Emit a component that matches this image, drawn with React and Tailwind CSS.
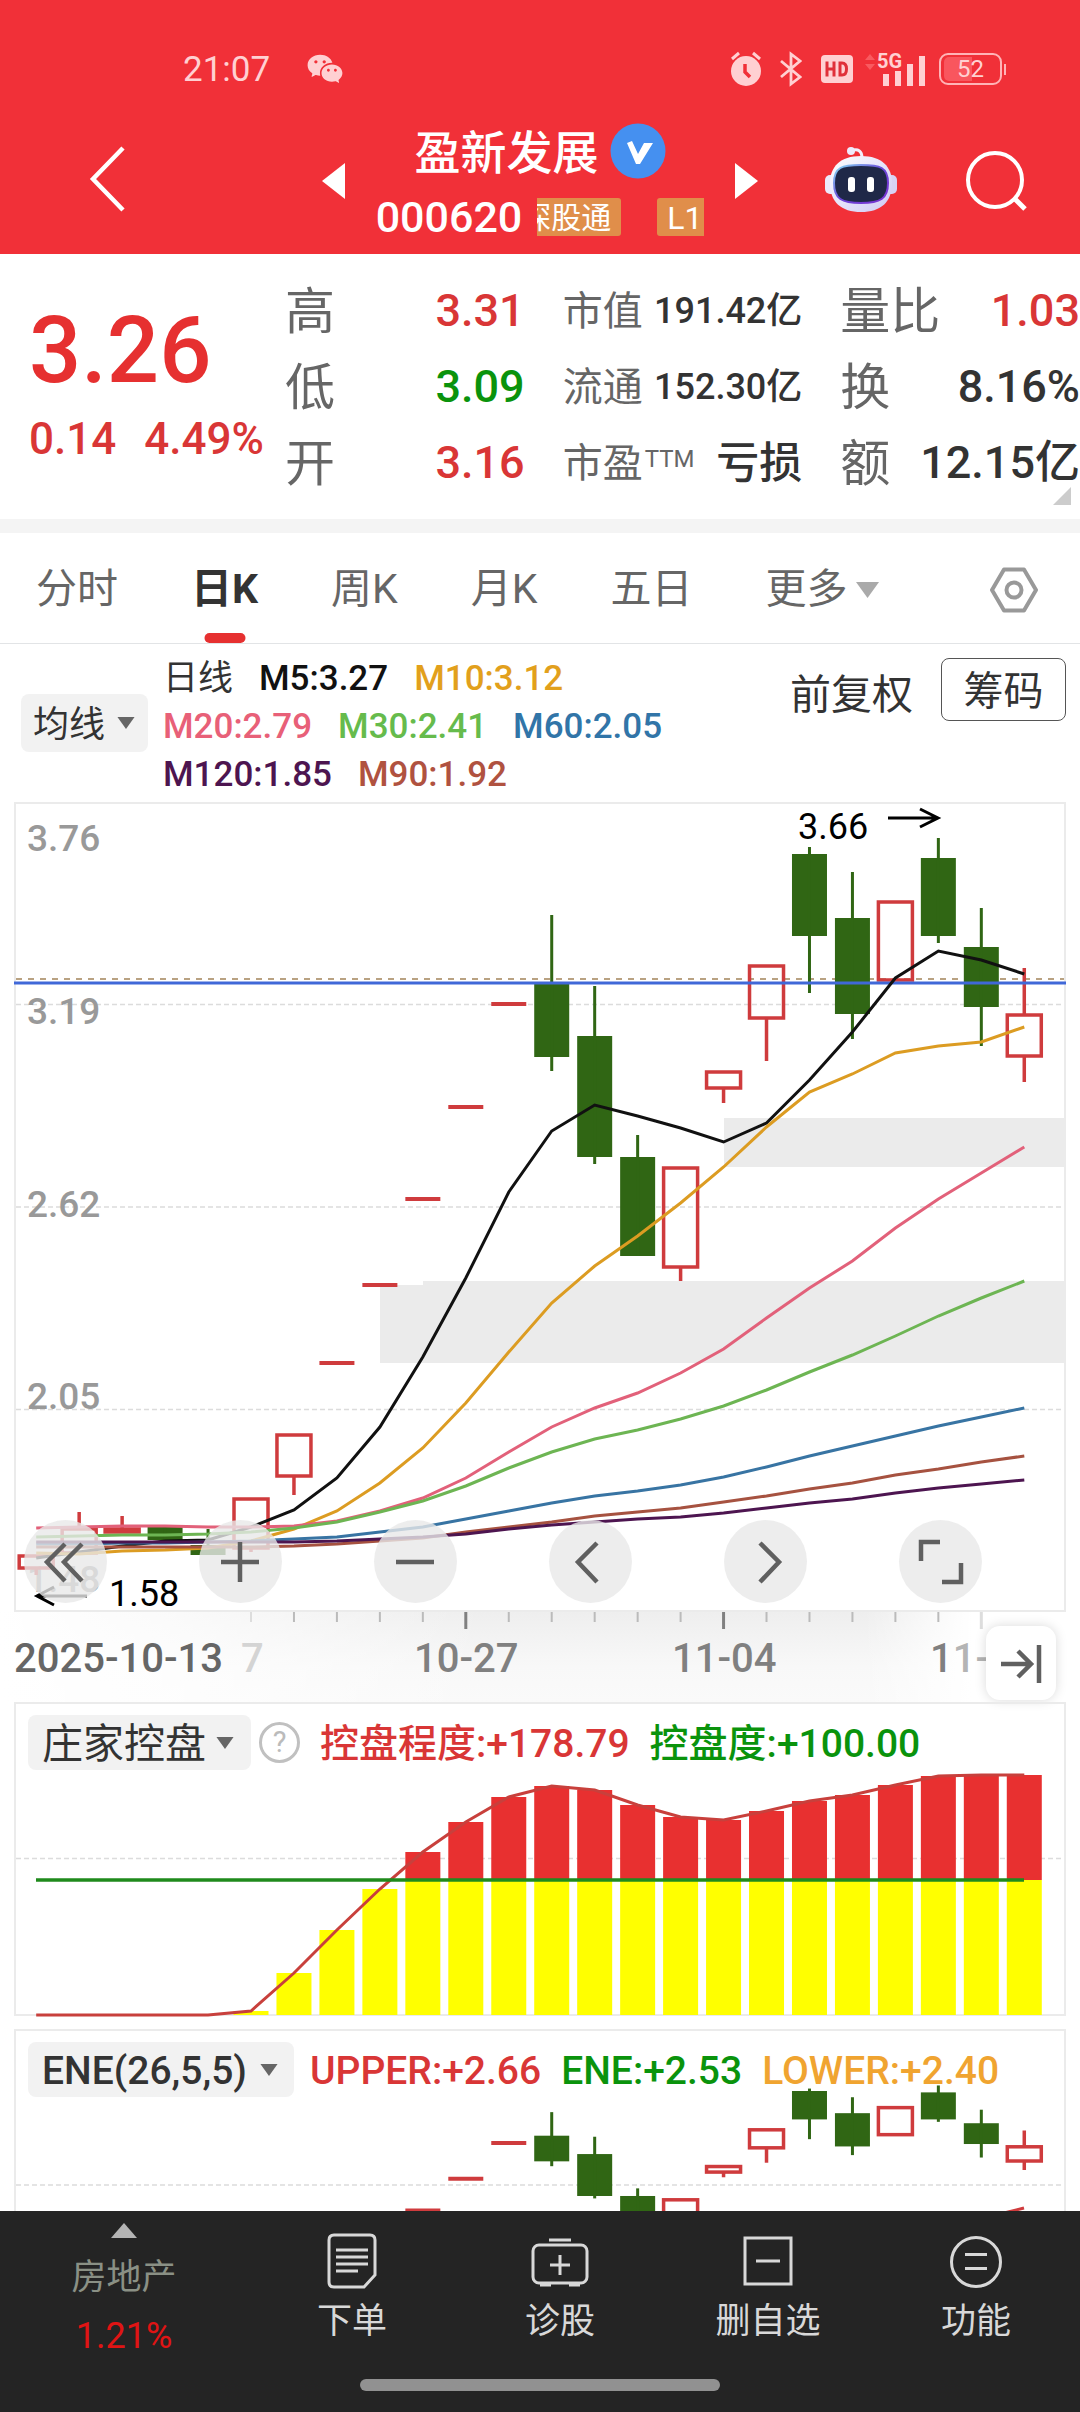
import React from "react";
import { RiWechatFill } from "react-icons/ri";

const STEP = 42.96;
const cx = (i) => 36.2 + STEP * i;

const GREEN = "#306614";
const RED = "#cf3b3d";

// Candle kinds: "u" hollow red, "d" solid green, "f" flat dash. Values: top, bottom, wick top, wick bottom.
const CANDLES = [
  ["u", 1556, 1568, 1556, 1575],
  ["u", 1529, 1553, 1512, 1553],
  ["u", 1529, 1532, 1516, 1532],
  ["d", 1527, 1540, 1527, 1540],
  ["d", 1545, 1555, 1529, 1555],
  ["u", 1499, 1548, 1499, 1552],
  ["u", 1435, 1476, 1435, 1495],
  ["f", 1363],
  ["f", 1285],
  ["f", 1199],
  ["f", 1107],
  ["f", 1004],
  ["d", 983, 1057, 915, 1071],
  ["d", 1036, 1157, 986, 1164],
  ["d", 1157, 1256, 1135, 1256],
  ["u", 1168, 1267, 1168, 1281],
  ["u", 1072, 1088, 1072, 1103],
  ["u", 966, 1018, 966, 1061],
  ["d", 854, 936, 847, 993],
  ["d", 918, 1014, 872, 1039],
  ["u", 902, 980, 902, 980],
  ["d", 858, 936, 838, 943],
  ["d", 947, 1007, 908, 1046],
  ["u", 1015, 1056, 968, 1082],
];

const AVERAGES = [
  ["#111111", [1558, 1552, 1546, 1541, 1540, 1527, 1510, 1478, 1427, 1357, 1278, 1192, 1131, 1105, 1116, 1128, 1142, 1123, 1080, 1032, 978, 951, 960, 974]],
  ["#dc9c22", [1553, 1554, 1551, 1550, 1548, 1541, 1529, 1511, 1483, 1448, 1403, 1352, 1303, 1266, 1236, 1203, 1167, 1127, 1092, 1074, 1053, 1046, 1042, 1027]],
  ["#e2617a", [1528, 1527, 1526, 1526, 1527, 1527, 1526, 1521, 1511, 1498, 1478, 1452, 1427, 1408, 1393, 1373, 1349, 1318, 1288, 1261, 1228, 1199, 1173, 1147]],
  ["#6db553", [1537, 1536, 1535, 1535, 1534, 1532, 1528, 1522, 1512, 1501, 1486, 1468, 1452, 1439, 1430, 1419, 1406, 1390, 1372, 1355, 1336, 1316, 1298, 1281]],
  ["#3874a3", [1544, 1544, 1543, 1543, 1542, 1541, 1539, 1537, 1532, 1527, 1519, 1511, 1503, 1496, 1491, 1485, 1477, 1467, 1456, 1446, 1436, 1426, 1417, 1408]],
  ["#a65240", [1547, 1547, 1547, 1547, 1547, 1547, 1546, 1544, 1541, 1538, 1532, 1527, 1522, 1516, 1512, 1508, 1502, 1496, 1489, 1483, 1475, 1469, 1462, 1456]],
  ["#4d1550", [1542, 1542, 1542, 1542, 1542, 1542, 1542, 1541, 1539, 1537, 1534, 1529, 1525, 1522, 1519, 1517, 1513, 1508, 1503, 1499, 1493, 1488, 1484, 1480]],
];

const points = (ys) => ys.map((y, i) => `${cx(i).toFixed(1)},${y}`).join(" ");

function Candles({ map = (y) => y }) {
  return CANDLES.map(([kind, top, bottom, high, low], i) => {
    const x = cx(i);
    if (kind === "f")
      return <line key={i} x1={x - 17.5} x2={x + 17.5} y1={map(top)} y2={map(top)} stroke={RED} strokeWidth="4" />;
    if (kind === "d")
      return (
        <g key={i} fill={GREEN}>
          <rect x={x - 17.5} y={map(top)} width="35" height={map(bottom) - map(top)} />
          <rect x={x - 1.5} y={map(high)} width="3" height={map(low) - map(high)} />
        </g>
      );
    return (
      <g key={i} fill="none" stroke={RED} strokeWidth="3.5">
        <rect x={x - 17} y={map(top)} width="34" height={map(bottom) - map(top)} />
        <path d={`M${x} ${map(high)}V${map(top)}M${x} ${map(bottom)}V${map(low)}`} />
      </g>
    );
  });
}

function StatusBar() {
  return (
    <div className="flex h-[104px] items-center pt-[34px] pr-[74px] pl-[183px] text-[#ffd0d2]">
      <span className="text-[35px] leading-none">21:07</span>
      <RiWechatFill className="ml-9 size-[38px]" />
      <div className="ml-auto flex items-center">
        <svg viewBox="0 0 32 36" className="h-9 w-8">
          <circle cx="16" cy="20" r="15" fill="currentColor" />
          <path d="M2 8L9 2M30 8L23 2" stroke="currentColor" strokeWidth="3" />
          <path d="M15 13V21L20 26" fill="none" stroke="#f13038" strokeWidth="3.5" />
        </svg>
        <svg viewBox="0 0 22 36" className="ml-[18px] h-9 w-[22px]" fill="none" stroke="currentColor" strokeWidth="2.8">
          <path d="M1 10L20 26L11 33V3L20 10L1 26" />
        </svg>
        <svg viewBox="0 0 34 30" className="ml-[18px] h-[30px] w-[34px]">
          <rect x="1" y="1" width="32" height="28" rx="4" fill="currentColor" />
          <path d="M7 7.500V22.500M14 7.500V22.500M7 15H14M20 9V21H22C25 21 26.500 19 26.500 15S25 9 22 9Z" fill="none" stroke="#e0303a" strokeWidth="3" />
        </svg>
        <svg viewBox="0 0 62 36" className="ml-[10px] h-9 w-[62px]">
          <path d="M1 9L6 3L11 9ZM1 13L6 19L11 13Z" fill="#f95a60" />
          <g fill="currentColor">
            <rect x="19" y="23" width="6" height="12" />
            <rect x="31" y="20" width="6" height="15" />
            <rect x="43" y="13" width="6" height="22" />
            <rect x="55" y="5" width="6" height="30" />
            <text x="13" y="17" fontSize="20" fontWeight="700">5G</text>
          </g>
        </svg>
        <div className="relative ml-[13px] flex h-8 w-[63px] items-center justify-center rounded-[9px] border-2 border-[#ffb4b7]">
          <div className="absolute inset-y-[2px] left-[3px] w-7 rounded-l-[5px] bg-[#f9565e]" />
          <span className="relative text-[24px] leading-none">52</span>
        </div>
        <div className="ml-[2px] h-[11px] w-[2px] bg-[#ffb4b7]" />
      </div>
    </div>
  );
}

function Robot() {
  return (
    <svg viewBox="0 0 74 68" className="h-[68px] w-[74px]">
      <defs>
        <linearGradient id="shell" x1="0" y1="0" x2="1" y2="1">
          <stop offset="0" stopColor="#ffffff" />
          <stop offset="0.5" stopColor="#e6e4fa" />
          <stop offset="1" stopColor="#cfc8f4" />
        </linearGradient>
        <linearGradient id="rim" x1="0" y1="0" x2="1" y2="1">
          <stop offset="0" stopColor="#86dcf4" />
          <stop offset="0.5" stopColor="#6a45d8" />
          <stop offset="1" stopColor="#7a2fd0" />
        </linearGradient>
      </defs>
      <rect x="1" y="30" width="12" height="19" rx="5" fill="#ece9fb" />
      <rect x="61" y="30" width="12" height="19" rx="5" fill="#d8d2f5" />
      <path d="M27 6C34 3 38 6 38 13" fill="none" stroke="#f3eefc" strokeWidth="3" />
      <circle cx="27" cy="6" r="4" fill="#eeeafc" />
      <path d="M37 11C58 11 68 22 68 38C68 57 57 67 37 67S6 57 6 38C6 22 16 11 37 11Z" fill="url(#shell)" />
      <path d="M37 20C56 20 64 22 64 38S56 58 37 58S10 54 10 38S18 20 37 20Z" fill="#1f2848" stroke="url(#rim)" strokeWidth="2" />
      <rect x="24" y="32" width="7" height="15" rx="3" fill="#fff" />
      <rect x="43" y="32" width="7" height="15" rx="3" fill="#fff" />
    </svg>
  );
}

function TitleBar() {
  return (
    <div className="flex h-[150px] items-center pr-[53px] pl-[89px] text-white">
      <div className="flex flex-1">
        <button aria-label="返回">
          <svg viewBox="0 0 38 66" className="h-[66px] w-[38px]" fill="none" stroke="currentColor" strokeWidth="4.500">
            <path d="M34 2L4 33L34 64" />
          </svg>
        </button>
      </div>
      <button aria-label="上一只" className="pt-1">
        <svg viewBox="0 0 23 36" className="h-9 w-[23px]"><path d="M23 0V36L0 18Z" fill="currentColor" /></svg>
      </button>
      <div className="flex w-[390px] flex-col items-center gap-[19px]">
        <div className="flex h-14 items-center gap-[11px]">
          <h1 className="pt-1 text-[46px] leading-none font-medium">盈新发展</h1>
          <svg viewBox="0 0 56 56" className="size-14">
            <circle cx="28" cy="28" r="27.500" fill="#4590f0" />
            <path d="M17 20L22 18L28 31L34 20H43L30 41H26Z" fill="#fff" />
          </svg>
        </div>
        <div className="flex h-[38px] items-center">
          <span className="pt-[2px] text-[43px] leading-none font-medium">000620</span>
          <span className="ml-[15px] flex h-[38px] w-[84px] justify-end overflow-hidden rounded-r-[3px] bg-[#e08e4a] pr-[10px] text-[30px] leading-[40px] whitespace-nowrap">深股通</span>
          <span className="ml-9 h-[38px] w-[47px] rounded-l-[3px] bg-[#e08e4a] pl-[10px] text-[32px] leading-[40px]">L1</span>
        </div>
      </div>
      <button aria-label="下一只" className="pt-1">
        <svg viewBox="0 0 23 36" className="h-9 w-[23px]"><path d="M0 0V36L23 18Z" fill="currentColor" /></svg>
      </button>
      <button aria-label="智能助手" className="ml-[66px]"><Robot /></button>
      <button aria-label="搜索" className="ml-[67px] pt-1">
        <svg viewBox="0 0 62 62" className="size-[62px]" fill="none" stroke="currentColor" strokeWidth="4">
          <circle cx="30" cy="30" r="27" />
          <path d="M49 48L60 59" strokeWidth="5" />
        </svg>
      </button>
    </div>
  );
}

function Stat({ label, sup, value, labelClass, valueClass }) {
  return (
    <div className="flex h-[76px] items-center justify-between whitespace-nowrap">
      <dt className={`flex pt-[2px] text-[#666] ${labelClass}`}>
        {label}
        {sup && <sup className="top-0 mt-[3px] ml-[2px] text-[24px] leading-none">{sup}</sup>}
      </dt>
      <dd className={`font-medium ${valueClass}`}>{value}</dd>
    </div>
  );
}

function Quote() {
  const big = "text-[50px] leading-none";
  const mid = "text-[40px] leading-none";
  return (
    <section className="relative flex h-[265px] pt-[19px]">
      <div className="w-[285px] pl-[29px] font-medium whitespace-nowrap text-[#e63030]">
        <div className="mt-7 text-[92px] leading-[100px]">3.26</div>
        <div className="mt-2 flex gap-7 text-[44px] leading-[60px] text-[#d93636]">
          <span>0.14</span>
          <span>4.49%</span>
        </div>
      </div>
      <dl className="grid flex-1 grid-cols-3 content-start gap-x-[38px]">
        <Stat label="高" value="3.31" labelClass={big} valueClass="text-[45px] text-[#d93636]" />
        <Stat label="市值" value="191.42亿" labelClass={mid} valueClass="text-[36px] text-[#333]" />
        <Stat label="量比" value="1.03" labelClass={big} valueClass="text-[45px] text-[#d93636]" />
        <Stat label="低" value="3.09" labelClass={big} valueClass="text-[45px] text-[#0a930c]" />
        <Stat label="流通" value="152.30亿" labelClass={mid} valueClass="text-[36px] text-[#333]" />
        <Stat label="换" value="8.16%" labelClass={big} valueClass="text-[45px] text-[#333]" />
        <Stat label="开" value="3.16" labelClass={big} valueClass="text-[45px] text-[#d93636]" />
        <Stat label="市盈" sup="TTM" value="亏损" labelClass={mid} valueClass="text-[43px] text-[#333]" />
        <Stat label="额" value="12.15亿" labelClass={big} valueClass="text-[45px] text-[#333]" />
      </dl>
      <svg viewBox="0 0 18 18" className="absolute right-[9px] bottom-[14px] size-[18px]"><path d="M18 0V18H0Z" fill="#ccc" /></svg>
    </section>
  );
}

function Caret({ className }) {
  return <svg viewBox="0 0 20 14" className={className}><path d="M0 0H20L10 14Z" fill="currentColor" /></svg>;
}

function Tabs() {
  return (
    <nav className="flex h-[111px] items-center gap-[73px] border-b border-[#e2e4e6] pt-1 pr-[42px] pl-9 text-[41px] whitespace-nowrap text-[#666]">
      <button>分时</button>
      <button className="relative flex h-full items-center font-bold text-[#333]">
        日K
        <span className="absolute bottom-0 left-1/2 h-[10px] w-[41px] -translate-x-1/2 rounded-[5px] bg-[#e63030]" />
      </button>
      <button>周K</button>
      <button>月K</button>
      <button>五日</button>
      <button className="flex items-center gap-2">
        更多
        <Caret className="h-[18px] w-[23px] text-[#aaa]" />
      </button>
      <button aria-label="设置" className="ml-auto">
        <svg viewBox="0 0 48 46" className="h-[46px] w-12" fill="none" stroke="#999" strokeWidth="4" strokeLinejoin="round">
          <path d="M14 2.500H34L46 23L34 43.500H14L2 23Z" />
          <circle cx="24" cy="23" r="7.500" />
        </svg>
      </button>
    </nav>
  );
}

function Chip({ children, className }) {
  return (
    <button className={`flex shrink-0 items-center justify-between rounded-lg bg-[#f2f2f2] whitespace-nowrap text-[#333] ${className}`}>
      <span className="pt-1">{children}</span>
      <Caret className="h-3 w-[18px] text-[#666]" />
    </button>
  );
}

function AverageLegend() {
  return (
    <section className="flex h-[158px] items-center pr-[14px] pl-[21px]">
      <Chip className="h-[58px] w-[127px] pr-[13px] pl-3 text-[36px]">均线</Chip>
      <div className="mt-2 ml-[15px] flex max-w-[530px] flex-wrap gap-x-[26px] text-[35px] leading-[48px] font-medium whitespace-nowrap">
        <span className="font-normal text-[#333]">日线</span>
        <span className="text-[#111]">M5:3.27</span>
        <span className="text-[#e2a01c]">M10:3.12</span>
        <span className="text-[#e86078]">M20:2.79</span>
        <span className="text-[#66bb4c]">M30:2.41</span>
        <span className="text-[#3175a8]">M60:2.05</span>
        <span className="text-[#4d1550]">M120:1.85</span>
        <span className="text-[#b05240]">M90:1.92</span>
      </div>
      <div className="mt-[14px] ml-auto flex items-center gap-7 self-start whitespace-nowrap text-[#333]">
        <button className="pt-3 text-[41px] leading-none">前复权</button>
        <button className="h-[63px] w-[125px] rounded-lg border border-[#555] pt-1 text-[40px] leading-none">筹码</button>
      </div>
    </section>
  );
}

const CONTROLS = [
  ["最左", "M41 24L23 42L41 61M58 24L40 42L58 61"],
  ["放大", "M41 22V62M22 42H60"],
  ["缩小", "M22 42H60"],
  ["左移", "M48 23L29 42L48 62"],
  ["右移", "M36 23L55 42L36 62"],
  ["全屏", "M22 41V22H41M62 43V62H43"],
];

function MainChart() {
  return (
    <section className="relative">
      <div className="mx-[14px] border-2 border-[#ebebeb]">
        <svg viewBox="16 804 1048 806" className="block w-full overflow-visible">
          <g fill="#ebebeb">
            <path d="M380 1285H423V1281H1065V1363H380Z" />
            <rect x="724" y="1118" width="341" height="49" />
          </g>
          <g stroke="#dcdcdc" strokeWidth="1.500" strokeDasharray="5 3">
            <path d="M16 1004.500H1064M16 1207H1064M16 1409.500H1064" />
          </g>
          <g fill="#999" fontSize="37" fontWeight="500">
            <text x="27" y="851">3.76</text>
            <text x="27" y="1024">3.19</text>
            <text x="27" y="1217">2.62</text>
            <text x="27" y="1409">2.05</text>
            <text x="27" y="1592">1.48</text>
          </g>
          <path d="M16 979H1064" stroke="#b9a282" strokeWidth="2" strokeDasharray="6 6" />
          <Candles />
          <path d="M14 983H1066" stroke="#4068d8" strokeWidth="3" />
          <g fill="none" strokeWidth="3">
            {AVERAGES.map(([color, ys]) => <polyline key={color} points={points(ys)} stroke={color} />)}
          </g>
          <g fontSize="36">
            <text x="798" y="839">3.66</text>
            <text x="109" y="1606">1.58</text>
          </g>
          <path d="M888 818H938M920 809L938 818L920 827M87 1596H37M54 1587L37 1596L54 1605" fill="none" stroke="#000" strokeWidth="3" />
        </svg>
      </div>
      <svg viewBox="0 1612 1080 90" className="block w-full">
        <defs>
          <linearGradient id="shade" x1="0" y1="0" x2="0" y2="1">
            <stop offset="0" stopColor="#eeeeee" />
            <stop offset="0.6" stopColor="#f8f8f8" />
            <stop offset="1" stopColor="#fafafa" />
          </linearGradient>
          <linearGradient id="fade">
            <stop offset="0" stopColor="#fff" />
            <stop offset="0.15" stopColor="#fff" stopOpacity="0.75" />
            <stop offset="0.45" stopColor="#fff" stopOpacity="0" />
            <stop offset="0.8" stopColor="#fff" stopOpacity="0" />
            <stop offset="0.9" stopColor="#fff" />
          </linearGradient>
        </defs>
        <rect y="1612" width="1080" height="90" fill="url(#shade)" />
        <rect y="1612" width="1080" height="90" fill="url(#fade)" />
        {Array.from({ length: 18 }, (_, k) => k + 5).map((i) => {
          const major = i === 10 || i === 16 || i === 22;
          const faint = i === 5 || i === 22;
          return (
            <line key={i} x1={cx(i)} x2={cx(i)} y1="1612" y2={major ? 1629 : 1622} stroke={faint ? "#ddd" : major ? "#808080" : "#bbb"} strokeWidth={major ? 3 : 2} />
          );
        })}
        <g fontSize="40" fontWeight="500" fill="#808080">
          <text x="14" y="1672" fill="#666">2025-10-13</text>
          <text x="241" y="1672" fill="#d4d4d4">7</text>
          <text x="414" y="1672">10-27</text>
          <text x="672" y="1672">11-04</text>
          <text x="930" y="1672">1<tspan fill="#b4b4b4">1-</tspan></text>
        </g>
      </svg>
      <div className="absolute inset-x-0 bottom-[99px] flex justify-between pr-[98px] pl-6">
        {CONTROLS.map(([name, d]) => (
          <button key={name} aria-label={name} className="size-[83px] rounded-full bg-[#e8e8e8]/80">
            <svg viewBox="0 0 83 83" className="size-full" fill="none" stroke="#606060" strokeWidth="4.5"><path d={d} /></svg>
          </button>
        ))}
      </div>
      <button aria-label="跳到最新" className="absolute right-6 bottom-[2px] h-[74px] w-[70px] rounded-[14px] bg-white shadow-[0_0_12px_rgba(0,0,0,0.15)]">
        <svg viewBox="0 0 70 74" className="size-full" fill="none" stroke="#606060" strokeWidth="4.5">
          <path d="M15 38H45M32 25L45 38L32 51M53 19V57" />
        </svg>
      </button>
    </section>
  );
}

const CONTROL_TOPS = [2015, 2015, 2015, 2015, 2015, 2011, 1973, 1930, 1889, 1852, 1822, 1797, 1786, 1790, 1805, 1817, 1820, 1811, 1801, 1795, 1785, 1776, 1775, 1775];

function ControlPanel() {
  return (
    <section className="relative mx-[14px] border-2 border-[#ebebeb]">
      <svg viewBox="16 1704 1048 310" className="block w-full overflow-visible">
        <path d="M16 1858.500H1064" stroke="#dcdcdc" strokeWidth="1.500" strokeDasharray="5 3" />
        {CONTROL_TOPS.map((y, i) => (
          <g key={i}>
            {y < 1880 && <rect x={cx(i) - 17.5} y={y} width="35" height={1880 - y} fill="#e83030" />}
            <rect x={cx(i) - 17.5} y={Math.max(y, 1880)} width="35" height={2015 - Math.max(y, 1880)} fill="#ffff00" />
          </g>
        ))}
        <polyline points={points(CONTROL_TOPS)} fill="none" stroke="#c8403c" strokeWidth="3" />
        <path d="M36 1880H1024" stroke="#1f8a1c" strokeWidth="3.500" />
      </svg>
      <div className="absolute top-[11px] left-3 flex items-center text-[39px] leading-none font-medium whitespace-nowrap">
        <Chip className="h-[55px] w-[223px] pr-[17px] pl-[14px] text-[41px] font-normal">庄家控盘</Chip>
        <button aria-label="说明" className="ml-2 flex size-[41px] items-center justify-center rounded-full border-[3px] border-[#c0c0c0] text-[29px] leading-none font-normal text-[#bbb]">?</button>
        <span className="ml-5 pt-1 text-[#d93636]">控盘程度:+178.79</span>
        <span className="ml-5 pt-1 text-[#0a930c]">控盘度:+100.00</span>
      </div>
    </section>
  );
}

function EnePanel() {
  return (
    <section className="relative mx-[14px] mt-[13px] border-2 border-[#ebebeb]">
      <svg viewBox="16 2031 1048 310" className="block w-full">
        <path d="M16 2185H1064" stroke="#dcdcdc" strokeWidth="1.500" strokeDasharray="5 3" />
        <Candles map={(y) => 2091 + 0.3465 * (y - 854)} />
        <path d="M1000 2214L1024 2208" stroke={RED} strokeWidth="3" />
      </svg>
      <div className="absolute top-[11px] left-3 flex items-center text-[39px] leading-none font-medium whitespace-nowrap">
        <Chip className="h-[55px] w-[266px] pr-4 pl-[14px]">ENE(26,5,5)</Chip>
        <span className="ml-4 pt-1 text-[#d93636]">UPPER:+2.66</span>
        <span className="ml-5 pt-1 text-[#0a930c]">ENE:+2.53</span>
        <span className="ml-5 pt-1 text-[#f0a430]">LOWER:+2.40</span>
      </div>
    </section>
  );
}

function NavItem({ label, children }) {
  return (
    <button className="flex flex-1 flex-col items-center gap-[10px] pt-[22px] text-[35px] leading-[46px] text-[#d8d8d8]">
      <svg viewBox="0 0 60 56" className="h-14 w-[60px]" fill="none" stroke="currentColor" strokeWidth="3">{children}</svg>
      {label}
    </button>
  );
}

function BottomNav() {
  return (
    <footer className="h-[201px] shrink-0 bg-[#242424]">
      <div className="flex h-[168px] items-start">
        <button className="flex w-[248px] flex-col items-center pt-3 text-[35px] text-[#8a9085]">
          <svg viewBox="0 0 26 15" className="h-[15px] w-[26px]"><path d="M13 0L26 15H0Z" fill="#b4b4b4" /></svg>
          <span className="mt-[15px] leading-[50px]">房地产</span>
          <span className="mt-2 text-[36px] leading-[50px] text-[#e01414]">1.21%</span>
        </button>
        <NavItem label="下单">
          <path d="M12 2H48Q53 2 53 7V42L42 54H12Q7 54 7 49V7Q7 2 12 2Z" />
          <path d="M14 17H46M14 24H46M14 31H46M14 38H36" />
        </NavItem>
        <NavItem label="诊股">
          <path d="M19 7H41" />
          <rect x="3" y="12" width="54" height="38" rx="6" />
          <path d="M30 22V42M20 32H40M10 52H21M39 52H50" />
        </NavItem>
        <NavItem label="删自选">
          <rect x="7" y="5" width="46" height="46" />
          <path d="M18 28H42" />
        </NavItem>
        <NavItem label="功能">
          <circle cx="30" cy="29" r="24.500" />
          <path d="M19 21.500H41M19 35.500H41" />
        </NavItem>
      </div>
      <div className="mx-auto h-3 w-1/3 rounded-full bg-[#919191]" />
    </footer>
  );
}

export default function App() {
  return (
    <div className="flex h-screen flex-col overflow-hidden bg-white font-['Roboto','Noto_Sans_CJK_SC',sans-serif]">
      <header className="shrink-0 bg-[#f13038]">
        <StatusBar />
        <TitleBar />
      </header>
      <main className="min-h-0 flex-1 overflow-hidden">
        <Quote />
        <div className="h-[14px] bg-[#f4f4f4]" />
        <Tabs />
        <AverageLegend />
        <MainChart />
        <ControlPanel />
        <EnePanel />
      </main>
      <BottomNav />
    </div>
  );
}
